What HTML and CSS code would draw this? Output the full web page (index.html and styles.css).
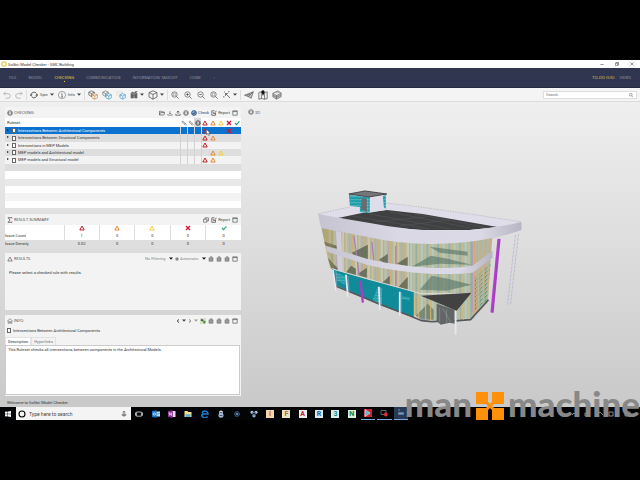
FILE: index.html
```html
<!DOCTYPE html>
<html lang="en">
<head>
<meta charset="utf-8">
<title>Solibri Model Checker - SMC Building</title>
<link rel="stylesheet" href="styles.css">
</head>
<body>
<svg class="defs" aria-hidden="true">
  <symbol id="tri" viewBox="0 0 6 6"><path d="M3 1 5.2 5H.8Z" fill="none" stroke="currentColor" stroke-width="1" stroke-linejoin="round"/></symbol>
  <symbol id="cross" viewBox="0 0 6 6"><path d="M1 1 5 5M5 1 1 5" stroke="currentColor" stroke-width="1.3"/></symbol>
  <symbol id="tick" viewBox="0 0 6 6"><path d="M1 3 2.5 4.6 5.4 1.4" fill="none" stroke="currentColor" stroke-width="1.1"/></symbol>
  <symbol id="caret" viewBox="0 0 4 3"><path d="M0 .5H4L2 2.8Z" fill="currentColor"/></symbol>
  <symbol id="win" viewBox="0 0 6 6"><path d="M.8.8H5.2V5.2H.8ZM.8 1.6H5.2" fill="none" stroke="currentColor" stroke-width=".6"/></symbol>
  <symbol id="cube" viewBox="0 0 10 10"><path d="M5 .8 9 2.6V7L5 9.2 1 7V2.6ZM1 2.6 5 4.4 9 2.6M5 4.4V9.2" fill="none" stroke="currentColor" stroke-width=".7"/></symbol>
  <symbol id="cubes" viewBox="0 0 10 10"><path d="M3.5.8 6.3 2.2V5L3.5 6.5.8 5V2.2ZM.8 2.2 3.5 3.5 6.3 2.2M3.5 3.5V6.5" fill="none" stroke="var(--back)" stroke-width=".7"/><path d="M6.7 3.5 9.4 4.8V7.8L6.7 9.2 4 7.8V4.8ZM4 4.8 6.7 6.1 9.4 4.8M6.7 6.1V9.2" fill="#f4f4f4" stroke="var(--front)" stroke-width=".7"/></symbol>
  <symbol id="zoom" viewBox="0 0 8 8"><circle cx="3.5" cy="3.5" r="2.7" fill="none" stroke="currentColor" stroke-width=".6"/><path d="M5.5 5.5 7.6 7.6M2.2 3.5H4.8" stroke="currentColor" stroke-width=".7"/></symbol>
  <symbol id="zoomin" viewBox="0 0 8 8"><circle cx="3.5" cy="3.5" r="2.7" fill="none" stroke="currentColor" stroke-width=".6"/><path d="M5.5 5.5 7.6 7.6M2.2 3.5H4.8M3.5 2.2V4.8" stroke="currentColor" stroke-width=".7"/></symbol>
  <symbol id="zoomfit" viewBox="0 0 8 8"><circle cx="3.5" cy="3.5" r="2.7" fill="none" stroke="currentColor" stroke-width=".6"/><path d="M5.5 5.5 7.6 7.6" stroke="currentColor" stroke-width=".7"/><path d="M2.3 2.3H4.7V4.7H2.3Z" fill="none" stroke="currentColor" stroke-width=".5" stroke-dasharray=".8 .4"/></symbol>
  <symbol id="undo" viewBox="0 0 8 8"><path d="M2.6.8.8 2.6 2.6 4.4M.8 2.6H5a2.2 2.2 0 0 1 0 4.6H2.5" fill="none" stroke="currentColor" stroke-width=".6"/></symbol>
  <symbol id="box" viewBox="0 0 6 6"><path d="M1 1.8H5V5.2H1ZM2 .8H4V1.8" fill="#999" stroke="#777" stroke-width=".6"/></symbol>
  <symbol id="report" viewBox="0 0 6 6"><path d="M4.5 3V5.3H.8V.8H3.6M2 2 3 4 5.4.8" fill="none" stroke="currentColor" stroke-width=".7"/></symbol>
  <symbol id="link" viewBox="0 0 6 6"><path d="M.9 1.8 1.8.9 3.2 2.3 2.3 3.2ZM2.9 3.8 3.8 2.9 5.2 4.3 4.3 5.2Z" fill="none" stroke="currentColor" stroke-width=".5"/></symbol>
  <symbol id="target" viewBox="0 0 6 6"><circle cx="3" cy="3" r="2.4" fill="none" stroke="currentColor" stroke-width=".6"/><path d="M1.5 2H4.5V4.2H1.5Z" fill="none" stroke="currentColor" stroke-width=".5"/></symbol>
  <symbol id="home" viewBox="0 0 6 6"><path d="M.4 3 3 .7 5.6 3M1.2 2.6V5.3H2.4V3.6H3.6V5.3H4.8V2.6" fill="none" stroke="currentColor" stroke-width=".5"/></symbol>
</svg>

<div class="app">
  <header class="titlebar">
    <svg class="i6" viewBox="0 0 6 6"><circle cx="3" cy="3" r="2.2" fill="#fff" stroke="#e3c52c" stroke-width="1.1"/></svg>
    <h1>Solibri Model Checker - SMC Building</h1>
    <div class="wincontrols">
      <button aria-label="Minimize"><svg class="i4" viewBox="0 0 4 4"><path d="M.3 2.5H3.7" stroke="#333" stroke-width=".5"/></svg></button>
      <button aria-label="Restore"><svg class="i4" viewBox="0 0 4 4"><path d="M.4 1.2H2.8V3.6H.4ZM1.2 1.2V.4H3.6V2.8H2.8" fill="none" stroke="#333" stroke-width=".5"/></svg></button>
      <button aria-label="Close"><svg class="i4" viewBox="0 0 4 4"><path d="M.4.4 3.6 3.6M3.6.4.4 3.6" stroke="#333" stroke-width=".5"/></svg></button>
    </div>
  </header>

  <nav class="nav">
    <a href="#">FILE</a><a href="#">MODEL</a><a href="#" class="active">CHECKING</a><a href="#">COMMUNICATION</a><a href="#">INFORMATION TAKEOFF</a><a href="#">COBIE</a><a href="#">+</a>
    <a href="#" class="todo">TO-DO (5/6)</a><a href="#" class="views">VIEWS</a>
  </nav>

  <div class="toolbar">
    <div class="group">
      <button class="pale" aria-label="Undo"><svg class="i8"><use href="#undo"/></svg></button>
      <button class="pale" aria-label="Redo"><svg class="i8 flip"><use href="#undo"/></svg></button>
    </div>
    <div class="group">
      <button><svg class="i8" viewBox="0 0 8 8"><path d="M1 4.5A3 3 0 0 1 6.5 2.5M7 3.5A3 3 0 0 1 1.6 5.6M.2 3.4 1 4.8 2.2 3.6M5.8 4.6 7 3.2 7.8 4.6" fill="none" stroke="#222" stroke-width=".7"/></svg>Spin <svg class="caret"><use href="#caret"/></svg></button>
      <button><svg class="i8" viewBox="0 0 8 8"><circle cx="4" cy="4" r="3.6" fill="none" stroke="#555" stroke-width=".5"/><path d="M4 1.8V2.6M3.2 3.4H4.1V6M3 6H5" fill="none" stroke="#444" stroke-width=".6"/></svg>Info <svg class="caret"><use href="#caret"/></svg></button>
    </div>
    <div class="group">
      <button aria-label="Show all"><svg class="i10 c1"><use href="#cubes"/></svg></button>
      <button aria-label="Show checked"><svg class="i10 c2"><use href="#cubes"/></svg></button>
      <button aria-label="Show selected"><svg class="i10 c3"><use href="#cubes"/></svg></button>
      <button aria-label="Binoculars"><svg class="i8" viewBox="0 0 8 8"><path d="M1 2.5 2 1.2H3.2L3.6 2.2H4.4L4.8 1.2H6L7 2.5V7H4.6V4.5H3.4V7H1Z" fill="#888" stroke="#333" stroke-width=".5"/><path d="M5 1 7.5.2M2.2 3V6M5.8 3V6" stroke="#333" stroke-width=".6"/></svg><svg class="caret"><use href="#caret"/></svg></button>
      <button aria-label="View cube"><svg class="i10"><use href="#cube"/></svg><svg class="caret"><use href="#caret"/></svg></button>
    </div>
    <div class="group wide">
      <button aria-label="Zoom to fit"><svg class="i8"><use href="#zoomfit"/></svg></button>
      <button aria-label="Zoom in"><svg class="i8"><use href="#zoomin"/></svg></button>
      <button aria-label="Zoom out"><svg class="i8"><use href="#zoom"/></svg></button>
      <button aria-label="Zoom window"><svg class="i8"><use href="#zoomfit"/></svg></button>
      <button aria-label="Select"><svg class="i8" viewBox="0 0 8 8"><path d="M2.5 2.5 7 7M2.5 2.5V4.9M2.5 2.5H4.9M5 .8H6.5M.8 5V6.5M1 1H2" stroke="#444" stroke-width=".7"/></svg><svg class="caret"><use href="#caret"/></svg></button>
    </div>
    <div class="group views3d">
      <button aria-label="Walk"><svg class="i10" viewBox="0 0 10 10"><path d="M.5 5.2 9.3 1.8 7.2 8.2 4.3 6.6ZM4.3 6.6 9.3 1.8M2.8 5.5 6 4" fill="#c4c4c4" stroke="#444" stroke-width=".6"/></svg></button>
      <button aria-label="Map"><svg class="i10" viewBox="0 0 10 10"><path d="M.8 2.6 3.4 1.8 6.6 2.6 9.2 1.8V8.6L6.6 9.2 3.4 8.6.8 9.2ZM3.4 2V8.6M6.6 2.6V9.2" fill="none" stroke="#333" stroke-width=".6"/><path d="M5 6 3.6 2.6A1.6 1.6 0 1 1 6.4 2.6Z" fill="#111"/></svg></button>
      <button aria-label="Layers"><svg class="i10" viewBox="0 0 10 10"><path d="M.8 3.2 6 .8 9.2 3 4.5 5.4ZM.8 3.2V7L4.5 9.2 9.2 6.8V3M.8 5.1 4.5 7.3 9.2 4.9M4.5 5.4V9.2" fill="#bbb" stroke="#555" stroke-width=".5"/></svg></button>
    </div>
    <label class="search"><input type="search" placeholder="Search" aria-label="Search"><svg class="i4" viewBox="0 0 8 8"><circle cx="3.5" cy="3.5" r="2.8" fill="none" stroke="#555"/><path d="M5.5 5.5 7.6 7.6" stroke="#555"/></svg></label>
  </div>

  <main class="work">
    <div class="side">
      <section class="panel">
        <div class="head">
          <svg class="i6"><use href="#target"/></svg><h2>CHECKING</h2>
          <div class="tools">
            <button aria-label="Open"><svg class="i6" viewBox="0 0 6 6"><path d="M.5 5V1.2H2.3L2.8 1.8H4.8V2.6M.5 5 1.6 2.6H5.8L4.8 5Z" fill="none" stroke="currentColor" stroke-width=".6"/></svg></button>
            <button aria-label="Import"><svg class="i6" viewBox="0 0 6 6"><path d="M3 1V4M2 3 3 4 4 3M.8 4V5.2H5.2V4" fill="none" stroke="currentColor" stroke-width=".5"/></svg></button>
            <button aria-label="Export"><svg class="i6" viewBox="0 0 6 6"><path d="M3 4V1M1.8 2.4 3 1 4.2 2.4M.8 3.8V5.2H5.2V3.8" fill="none" stroke="currentColor" stroke-width=".7"/></svg></button>
            <button aria-label="Settings"><svg class="i6"><use href="#target"/></svg></button>
            <button class="check"><svg class="i6" viewBox="0 0 6 6"><circle cx="3" cy="3" r="2.4" fill="#8bb0d6" stroke="#1c4b7c" stroke-width=".8"/><path d="M1.6 3 2.7 4.2 4.6 1.8" fill="none" stroke="#123" stroke-width=".7"/></svg>Check</button>
            <button><svg class="i6"><use href="#report"/></svg>Report</button>
            <button aria-label="Maximize"><svg class="i6"><use href="#win"/></svg></button>
          </div>
        </div>
        <table class="rules">
          <thead><tr><th class="name">Ruleset</th><th><svg><use href="#link"/></svg></th><th><svg><use href="#link"/></svg></th><th class="shade"><svg><use href="#target"/></svg></th><th class="sev red"><svg><use href="#tri"/></svg></th><th class="sev orange"><svg><use href="#tri"/></svg></th><th class="sev yellow"><svg><use href="#tri"/></svg></th><th class="sev crimson"><svg><use href="#cross"/></svg></th><th class="sev green"><svg><use href="#tick"/></svg></th></tr></thead>
          <tbody>
            <tr class="selected"><td><i class="arrow"></i><i class="book"></i>Intersections Between Architectural Components</td><td></td><td></td><td></td><td class="red cursorcell"><svg><use href="#tri"/></svg><svg class="cursor" viewBox="0 0 5 7"><path d="M.4.3V5.6L1.7 4.5 2.6 6.6 3.5 6.2 2.6 4.2H4.4Z" fill="#fff" stroke="#222" stroke-width=".4"/></svg></td><td></td><td></td><td class="crimson"><svg><use href="#cross"/></svg></td><td></td></tr>
            <tr class="dark"><td><i class="arrow"></i><i class="book"></i>Intersections Between Structural Components</td><td></td><td></td><td></td><td class="red"><svg><use href="#tri"/></svg></td><td class="orange"><svg><use href="#tri"/></svg></td><td></td><td></td><td></td></tr>
            <tr><td><i class="arrow"></i><i class="book"></i>Intersections in MEP Models</td><td></td><td></td><td></td><td class="red"><svg><use href="#tri"/></svg></td><td></td><td></td><td></td><td></td></tr>
            <tr class="dark"><td><i class="arrow"></i><i class="book"></i>MEP models and Architectural model</td><td></td><td></td><td></td><td></td><td class="orange"><svg><use href="#tri"/></svg></td><td class="yellow"><svg><use href="#tri"/></svg></td><td></td><td></td></tr>
            <tr><td><i class="arrow"></i><i class="book"></i>MEP models and Structural model</td><td></td><td></td><td></td><td class="red"><svg><use href="#tri"/></svg></td><td class="orange"><svg><use href="#tri"/></svg></td><td></td><td></td><td></td></tr>
            <tr class="dark"><td colspan="9"></td></tr>
            <tr class="white"><td colspan="9"></td></tr>
            <tr class="mid"><td colspan="9"></td></tr>
            <tr class="white"><td colspan="9"></td></tr>
            <tr><td colspan="9"></td></tr>
            <tr class="white"><td colspan="9"></td></tr>
          </tbody>
        </table>
      </section>

      <section class="panel">
        <div class="head">
          <svg class="i6" viewBox="0 0 6 6"><path d="M5 1.4V.7H1L3 3 1 5.3H5V4.6" fill="none" stroke="currentColor" stroke-width=".7"/></svg><h2>RESULT SUMMARY</h2>
          <div class="tools">
            <button aria-label="Copy"><svg class="i6" viewBox="0 0 6 6"><path d="M.6 2.2H3.8V5.2H.6ZM2 2.2V.8H5.4V4H3.8" fill="none" stroke="currentColor" stroke-width=".6"/></svg></button>
            <button><svg class="i6"><use href="#report"/></svg>Report</button>
            <button aria-label="Maximize"><svg class="i6"><use href="#win"/></svg></button>
          </div>
        </div>
        <table class="summary">
          <thead><tr><th class="label"></th><th class="red"><svg><use href="#tri"/></svg></th><th class="orange"><svg><use href="#tri"/></svg></th><th class="yellow"><svg><use href="#tri"/></svg></th><th class="crimson"><svg><use href="#cross"/></svg></th><th class="green"><svg><use href="#tick"/></svg></th></tr></thead>
          <tbody>
            <tr><th>Issue Count</th><td>1</td><td>0</td><td>0</td><td>0</td><td>0</td></tr>
            <tr class="dark"><th>Issue Density</th><td>0.02</td><td>0</td><td>0</td><td>0</td><td>0</td></tr>
          </tbody>
        </table>
      </section>

      <section class="panel results">
        <div class="head">
          <svg class="i6" viewBox="0 0 6 6"><path d="M3 1 5.2 5H.8Z" fill="none" stroke="currentColor" stroke-width=".6"/></svg><h2>RESULTS</h2>
          <div class="tools">
            <label class="drop"><select aria-label="Filtering"><option>No Filtering</option></select><svg class="caret"><use href="#caret"/></svg></label>
            <label class="drop"><svg class="i4" viewBox="0 0 4 4"><circle cx="2" cy="2" r="1.7" fill="#888"/></svg><select aria-label="Grouping"><option>Automatic</option></select><svg class="caret"><use href="#caret"/></svg></label>
            <button aria-label="Add"><svg class="i6"><use href="#box"/></svg></button>
            <button aria-label="Edit"><svg class="i6"><use href="#box"/></svg></button>
            <button aria-label="Remove"><svg class="i6"><use href="#box"/></svg></button>
            <button aria-label="Maximize"><svg class="i6"><use href="#win"/></svg></button>
          </div>
        </div>
        <p>Please select a checked rule with results.</p>
      </section>

      <section class="panel info">
        <div class="head">
          <svg class="i6"><use href="#home"/></svg><h2>INFO</h2>
          <div class="tools">
            <button aria-label="Back"><svg class="i4" viewBox="0 0 4 4"><path d="M3 .4 1.2 2 3 3.6" fill="none" stroke="#111" stroke-width=".8"/></svg></button>
            <button aria-label="Back history"><svg class="caret"><use href="#caret"/></svg></button>
            <button aria-label="Forward"><svg class="i4" viewBox="0 0 4 4"><path d="M1 .4 2.8 2 1 3.6" fill="none" stroke="#444" stroke-width=".7"/></svg></button>
            <button class="pale" aria-label="Forward history"><svg class="caret"><use href="#caret"/></svg></button>
            <button aria-label="Follow selection"><svg class="i6 follow" viewBox="0 0 6 6"><path d="M.8 1.2H3.2V3H.8Z" fill="#555"/><path d="M2.8 3 5.4 3.4 4.2 5.4Z" fill="#4aa02c" stroke="#4aa02c"/></svg></button>
            <button aria-label="Add"><svg class="i6"><use href="#box"/></svg></button>
            <button aria-label="Edit"><svg class="i6"><use href="#box"/></svg></button>
            <button aria-label="Remove"><svg class="i6"><use href="#box"/></svg></button>
            <button aria-label="Maximize"><svg class="i6"><use href="#win"/></svg></button>
          </div>
        </div>
        <h3><i class="book"></i>Intersections Between Architectural Components</h3>
        <div class="tabs" role="tablist"><button role="tab" class="on">Description</button><button role="tab">Hyperlinks</button></div>
        <div class="description">This Ruleset checks all intersections between components in the Architectural Models.</div>
      </section>
      <footer class="status">Welcome to Solibri Model Checker</footer>
    </div>

    <section class="view">
      <div class="viewhead"><svg class="i6"><use href="#target"/></svg><h2>3D</h2></div>
      <svg class="scene" viewBox="310 185 220 155" role="img" aria-label="Building model">
        <defs>
          <pattern id="mull" width="13" height="40" patternUnits="userSpaceOnUse" patternTransform="skewY(8)">
            <rect width="13" height="40" fill="#b0b9a6"/>
            <path d="M4 0V40H8V0Z" fill="#c5cbb9"/>
            <path d="M1 0V40" stroke="#dda95c" stroke-width="1.2"/><path d="M4.8 0V40M9 0V40" stroke="#dcc08a" stroke-width=".9"/><path d="M7 0V40" stroke="#8c8d70" stroke-width=".6"/><path d="M11.5 0V40" stroke="#b895b4" stroke-width=".5"/>
          </pattern>
          <pattern id="curved" width="11" height="40" patternUnits="userSpaceOnUse">
            <rect width="11" height="40" fill="#a7bdb2"/>
            <path d="M1 0V40" stroke="#e4b462" stroke-width="1.1"/><path d="M7 0V40" stroke="#d7bd7c" stroke-width="1"/><path d="M4 0V40" stroke="#bfccb9" stroke-width="1.6"/><path d="M9.5 0V40" stroke="#87a69b" stroke-width=".8"/>
          </pattern>
          <pattern id="hatch" width="3" height="3" patternUnits="userSpaceOnUse"><rect width="3" height="3" fill="#149aa7"/><path d="M0 1 3 2.2" stroke="#9dd0d6" stroke-width=".6"/></pattern>
          <pattern id="speck" width="5" height="4" patternUnits="userSpaceOnUse" patternTransform="skewY(-38)"><path d="M0 0H3V1H1V2.4H0Z" fill="#2d9f9c"/></pattern>
          <linearGradient id="fascia"><stop offset="0" stop-color="#c6c3d1"/><stop offset=".4" stop-color="#dad8e4"/><stop offset=".8" stop-color="#dbd9e5"/><stop offset="1" stop-color="#b7b5c3"/></linearGradient>
        </defs>
        <path d="M318 214 350 207 362 207V213L338 218ZM386 203 420 208 470 214 522 222 498 227 430 216 386 210Z" fill="#dfdde9"/>
        <path d="M318 214 350 207M386 203 420 207 470 214 522 222" fill="none" stroke="#a09eac" stroke-width=".5" stroke-dasharray="1.5 1"/>
        <path d="M338 218 362 213 387 210 423 214 498 227 470 230 420 230 375 226Z" fill="#3f4042"/>
        <path d="M352 216 430 229M370 214 450 229M390 212 470 228M415 214 488 228M375 222 425 217M400 226 450 220" stroke="#555658" stroke-width=".6"/>
        <path d="M349 195 368 197V213L360 212V207L350 206Z" fill="url(#hatch)"/>
        <path d="M362 198 367 199V212L361 209Z" fill="#6b6b70"/>
        <path d="M368 197 386 195V210L368 213Z" fill="#dedeea"/>
        <path d="M368 197H370V212L368 213ZM383 196 386 195V209L384 207Z" fill="url(#hatch)"/>
        <path d="M349 194 365 191 387 194 369 197Z" fill="#77767a" stroke="#3e3e42" stroke-width=".9"/>
        <path d="M321 226 367 236 420 244 V295 L367 279 330 269Z" fill="url(#mull)"/>
        <path d="M410 243 460 242 474 240V319L458 322 430 320 410 314Z" fill="url(#curved)"/>
        <path d="M473 240 493 235 488 303 472 319Z" fill="#b5b69f"/>
        <path d="M474 279 491 264 488 300 474 312Z" fill="url(#speck)"/>
        <path d="M475 241V316M478 240 477 314M482 239 480 310M486 238 484 306M491 237 488 302" fill="none" stroke="#dba568" stroke-width=".7"/>
        <path d="M472.5 242V312" stroke="#b78acb" stroke-width="1"/>
        <path d="M324 242 337 246V249L326 246ZM352 253 368 245V261L355 257ZM379 260 388 254V265ZM397 264 408 257V267ZM328 258 341 272 331 268ZM346 273 351 266 356 269V276ZM358 274 367 268V278L360 276ZM380 285 390 276V288ZM398 288 408 277V293Z" fill="#59634f" opacity=".8"/>
        <path d="M412 267 431 256 448 259 472 265 440 264ZM430 247 468 252V256L440 253ZM420 290 432 276 448 279 472 285 447 291Z" fill="#547166" opacity=".6"/>
        <path d="M321 226 334 231V271L332 269Z" fill="#a18a49" opacity=".35"/>
        <path d="M336 231 341 232 343 272 338 271Z" fill="#cfcddb"/>
        <path d="M354 236 360 280M396 246V292M372 242 374 262" stroke="#ab7abb" stroke-width="1.2"/>
        <path d="M325 246 367 259Q395 266 430 268 455 269 473 266L493 251V258L473 273Q455 275 430 274 395 272 367 265L327 252Z" fill="url(#fascia)"/>
        <path d="M318 214Q345 219 370 223 420 233 470 230 498 228 522 222V230Q498 239 460 243 410 247 367 237L321 228Z" fill="url(#fascia)"/>
        <path d="M332 269 367 279 414 292V318L379 305 335 285Z" fill="#108b99"/>
        <path d="M336 273 345 276V285L337 281ZM402 296 410 298V301L402 299Z" fill="url(#hatch)"/>
        <path d="M378 287 382 288V305L372 302Z" fill="url(#hatch)"/>
        <path d="M332 269 367 279 422 294H472" fill="none" stroke="#ddd6d2" stroke-width="1.2"/>
        <path d="M335 286 379 304 410 316 422 321 432 322 458 321 471 320 489 300" fill="none" stroke="#55595b" stroke-width="1.6"/>
        <path d="M416 316 428 304 434 310V320H422Z" fill="#5e7467" opacity=".7"/>
        <path d="M415 297V316M419 297V318M426 299V320M431 302V321M460 311V320M464 306V320M468 300V319" stroke="#e5b467" stroke-width="1"/>
        <path d="M437 304 455 310V324L450 323 441 325 437 321Z" fill="#636667"/><path d="M440 308V322M443 309 451 322M447 310V323" stroke="#a0a3a3" stroke-width=".5"/>
        <path d="M421 296 472 293 457 311Z" fill="#424242"/>
        <path d="M333 270 336 291M346 275 348 297M379 287 380 310M400 292V316M456 311V335" stroke="#e9e7f0" stroke-width="1.8"/>
        <path d="M336 271 337 290M348 276 349.5 296M381 288 381.5 309M401.5 293V315" stroke="#b0b1c8" stroke-width=".5"/>
        <path d="M360.5 281 363 303" stroke="#b138c6" stroke-width="2.2"/>
        <path d="M499.5 239 492.5 313" stroke="#b43dce" stroke-width="3.2"/><path d="M500 239 493 313" stroke="#8c4aa1" stroke-width=".6"/>
        <path d="M516 235 508 305M519 234 511 305" stroke="#bcaed4" stroke-width=".8" stroke-dasharray="3 1"/>
      </svg>
    </section>
  </main>

  <footer class="taskbar">
    <button class="start" aria-label="Start"><svg class="i6" viewBox="0 0 6 6"><path d="M0 .8 2.6.4V2.8H0ZM3 .4 6 0V2.8H3ZM0 3.2H2.6V5.6L0 5.2ZM3 3.2H6V6L3 5.6Z" fill="#fff"/></svg></button>
    <label class="tasksearch"><svg class="i8" viewBox="0 0 8 8"><circle cx="4" cy="4" r="3" fill="none" stroke="#000" stroke-width="1.1"/></svg><input type="text" placeholder="Type here to search" aria-label="Type here to search"><svg class="i6" viewBox="0 0 6 6"><path d="M2.2.5H3.8V3.5H2.2ZM1.2 3V4.5H4.8V3M3 4.5V6" fill="none" stroke="#444" stroke-width=".6"/></svg></label>
    <div class="apps">
      <button aria-label="Task view"><svg class="i8" viewBox="0 0 8 8"><path d="M1.6 2H6.4V6.2H1.6ZM.5 2.5V5.7M7.5 2.5V5.7" fill="none" stroke="#ddd" stroke-width=".8"/></svg></button>
      <button aria-label="Outlook"><svg class="i8" viewBox="0 0 8 8"><path d="M3 1.5H8V6.5H3Z" fill="#b8def7"/><path d="M0 1 4.5.3V7.7L0 7Z" fill="#1173c5"/><circle cx="2.3" cy="4" r="1.2" fill="none" stroke="#fff" stroke-width=".7"/><path d="M4 2.5 6 4.5 8 2.5" fill="none" stroke="#1173c5" stroke-width=".7"/></svg></button>
      <button aria-label="OneNote"><svg class="i8" viewBox="0 0 8 8"><path d="M3 1H7.5V7H3Z" fill="#e9d2ec"/><path d="M0 1 4.8.3V7.7L0 7Z" fill="#84318c"/><path d="M1.3 5.5V2.5L3.3 5.5V2.5" fill="none" stroke="#fff" stroke-width=".7"/></svg></button>
      <button aria-label="File Explorer"><svg class="i8" viewBox="0 0 8 8"><path d="M.5 1H3.5L4.2 2H7.5V7H.5Z" fill="#f4e08e"/><path d="M1.5 4.2H6.5V7H1.5Z" fill="#5ab4d5"/></svg></button>
      <button aria-label="Edge"><svg class="i8" viewBox="0 0 8 8"><path d="M1 4H7A3 3 0 0 0 1.2 3M1 4A3 3 0 0 0 6.5 6.3" fill="none" stroke="#1680d8" stroke-width="1.5"/></svg></button>
      <button aria-label="Assistant"><svg class="i8" viewBox="0 0 8 8"><circle cx="4" cy="2.5" r="2" fill="#d4deee"/><circle cx="4" cy="5.3" r="2.5" fill="#a8b9d8"/><path d="M2.8 2.5H5.2M2.5 5.5H5.5" stroke="#243b64" stroke-width=".8"/></svg></button>
      <button aria-label="Settings"><svg class="i8" viewBox="0 0 8 8"><circle cx="4" cy="4" r="2.5" fill="#1c304b" stroke="#56708f" stroke-width="1" stroke-dasharray="1 .6"/><circle cx="4" cy="4" r="1" fill="#7aa0c3"/></svg></button>
      <button aria-label="Network"><svg class="i8" viewBox="0 0 8 8"><circle cx="2" cy="2.3" r="1.5" fill="#c4d6ed"/><circle cx="6" cy="2.3" r="1.5" fill="#c4d6ed"/><circle cx="4" cy="5.8" r="1.7" fill="#90aaca"/><path d="M2 2.3H6L4 5.8Z" fill="none" stroke="#496c98" stroke-width=".6"/></svg></button>
      <button class="letter inventor">I</button>
      <button class="letter formit">F</button>
      <button class="letter autocad">A</button>
      <button class="letter revit">R</button>
      <button class="letter max">3</button>
      <button class="letter navis">N</button>
      <button class="open" aria-label="Viewer"><svg class="i8" viewBox="0 0 8 8"><path d="M0 0H8V8H0Z" fill="#c92832"/><path d="M1 .5 6 4 1 7.5Z" fill="#55b4dd" stroke="#fff" stroke-width=".5"/></svg></button>
      <button class="open" aria-label="Recorder"><svg class="i8" viewBox="0 0 8 8"><path d="M1 1.5H6V5.5H1Z" fill="none" stroke="#8b8b8b" stroke-width=".7"/><circle cx="5.8" cy="5.5" r="1.9" fill="#e13035"/></svg></button>
      <button class="open current" aria-label="Model Checker"><svg class="i8" viewBox="0 0 8 8"><path d="M1 3H7V6H1Z" fill="#53769e"/><path d="M1 1H3M2 4.5H6" stroke="#85a8cd" stroke-width=".8"/></svg></button>
    </div>
    <div class="tray"><svg class="trayicons" viewBox="0 0 60 8"><path d="M1 5 3 3 5 5M14 3H18V6H14ZM26 5 29 2 32 5M38 2H42V6H38ZM54 2H59V6H54Z" fill="none" stroke="#bbb" stroke-width=".7"/></svg></div>
  </footer>
  <div class="watermark"><span>man</span><svg viewBox="0 0 28 28"><path d="M0 0H12V12H0ZM16 0H28V12H16ZM0 16H12V28H0ZM16 16H28V28H16Z" fill="#ff910a"/><path d="M9 9 19 19M19 9 9 19" stroke="#ff910a" stroke-width="3"/></svg><span>machine</span></div>
</div>
</body>
</html>
```

FILE: styles.css
```css
* { box-sizing: border-box; }
body {
  margin: 0;
  padding: 60px 0;
  background: #000;
  font-family: Roboto, "Liberation Sans", sans-serif;
  font-size: 4px;
  line-height: 5px;
  color: #333;
}
button, input, select {
  margin: 0;
  padding: 0;
  border: 0;
  background: none;
  font: inherit;
  color: inherit;
  appearance: none;
  outline: 0;
}
button { display: flex; align-items: center; gap: 1px; }
svg { display: block; flex: none; }
h1, h2, h3, p { margin: 0; font-size: 4px; font-weight: 400; }
h2, .nav { font-family: "Open Sans", sans-serif; }
a { color: inherit; text-decoration: none; }
.defs { position: absolute; width: 0; height: 0; }
.i4 { width: 4px; height: 4px; }
.i6 { width: 6px; height: 6px; }
.i8 { width: 8px; height: 8px; }
.i10 { width: 10px; height: 10px; }
.caret { width: 4px; height: 3px; }
.flip { transform: scaleX(-1); }
.pale { color: #999; }
.red { color: #c8202b; }
.orange { color: #ec8a2c; }
.yellow { color: #f2cf35; }
.crimson { color: #cf1430; }
.green { color: #25ab73; }

.app { position: relative; }
.titlebar { display: flex; align-items: center; height: 8px; padding: 0 6px 0 1px; gap: 1px; background: #fff; }
.wincontrols { display: flex; gap: 11px; margin-left: auto; }

.nav {
  display: flex;
  align-items: center;
  gap: 12px;
  height: 20px;
  padding: 0 9px;
  background: #30364f;
  border-bottom: 1px solid #262a3e;
  color: #9296a4;
}
.nav .active { color: #f6d63c; position: relative; }
.nav .active::after { content: ""; position: absolute; left: 50%; top: 6px; width: 1px; height: 1px; background: #f0cf3a; }
.nav .todo { margin-left: auto; color: #e3c852; }
.nav .views { margin-left: -7px; }

.toolbar { display: flex; align-items: center; height: 14px; padding: 0 3px; background: #f4f4f4; border-bottom: 1px solid #dcdcdc; color: #444; }
.group { display: flex; align-items: center; gap: 4px; height: 10px; padding-right: 3px; margin-right: 3px; border-right: 1px solid #ddd; }
.group.wide { gap: 5px; }
.views3d { border: 0; }
.toolbar button { gap: 2px; }
.c1 { --back: #555; --front: #c78b52; }
.c2 { --back: #777; --front: #4d9fcb; }
.c3 { --back: #ddd; --front: #4d9fcb; }
.search { display: flex; align-items: center; width: 94px; height: 8px; margin-left: auto; padding: 0 3px 0 2px; background: #fff; border: 1px solid #ddd; }
.search input { flex: 1; min-width: 0; }
input::placeholder { color: #777; opacity: 1; }

.work { display: flex; min-height: 305px; background: linear-gradient(#efefef, #c9c9c9); }
.side { display: flex; flex-direction: column; flex: 0 0 241px; padding: 5px 0 0 5px; gap: 5px; }
.panel { background: #f3f3f3; }
.panel:first-child { margin-bottom: 1px; }
.head { display: flex; align-items: center; gap: 1px; height: 11px; padding: 0 3px 0 2px; color: #444; }
.tools { display: flex; align-items: center; gap: 2px; margin-left: auto; }
.check { color: #234c78; }

table { width: 100%; border-collapse: collapse; table-layout: fixed; }
th, td { padding: 0; font-weight: 400; line-height: 5px; text-align: center; overflow: hidden; white-space: nowrap; }
td svg, th svg { width: 6px; height: 6px; margin: 0 auto; }
.rules { height: 90px; }
.rules thead tr { height: 9px; background: #fff; }
.rules tbody tr { height: 7px; }
.rules th { width: 7px; }
.rules .name { width: auto; padding-left: 2px; text-align: left; }
.rules .sev { width: 8px; }
.rules .shade { background: #d8d8d8; }
.rules tbody td:first-child { padding-left: 1px; text-align: left; }
.rules tbody td:nth-child(-n+4):not(:last-child) { border-right: 1px solid #d2d2d2; }
.dark { background: #dedede; }
.mid { background: #e8e8e8; }
.white { background: #fff; }
.rules .selected { background: #0b72cf; color: #fff; }
.rules .selected td:nth-child(-n+4) { border-color: #3d8cd6; }
.arrow { display: inline-block; margin: 0 3px 1px 1px; border-left: 2px solid #222; border-top: 1px solid transparent; border-bottom: 1px solid transparent; }
.book { display: inline-block; width: 4px; height: 5px; margin-right: 2px; border: 1px solid #666; background: #fff; vertical-align: middle; }
.cursorcell { position: relative; overflow: visible; }
.rules .cursor { position: absolute; left: 4px; top: 2px; width: 5px; height: 7px; z-index: 1; }

.summary { height: 23px; }
.summary tr:not(.dark) { background: #fff; }
.summary .label { width: 59px; }
.summary tbody th { text-align: left; }
.summary th:not(:last-child), .summary td:not(:last-child) { border-right: 1px solid #ddd; }

.results { min-height: 57px; }
.results p { padding: 6px 4px; }
.drop { display: flex; align-items: center; gap: 1px; color: #888; }
.drop .caret { color: #111; }
.drop select { width: auto; margin-right: 2px; }

.info { display: flex; flex-direction: column; height: 81px; }
.info h3 { padding: 2px; height: 11px; line-height: 6px; }
.follow { background: #d7dfcf; }
.tabs { display: flex; height: 8px; }
.tabs button { padding: 0 2px; border: 1px solid #e2e2e2; border-bottom: 0; color: #777; }
.tabs .on { background: #fff; color: #333; }
.description { flex: 1; margin: 0 1px 1px 0; padding: 1px 2px; background: #fff; border: 1px solid #ccc; }
.status { padding-left: 2px; line-height: 4px; }

.view { flex: 1; min-width: 0; padding: 7px; }
.viewhead { display: flex; align-items: center; gap: 1px; height: 6px; color: #555; }
.scene { width: 57%; margin: 70px 0 0 62px; }

.taskbar { display: flex; align-items: stretch; height: 13px; background: #030406; color: #fff; }
.start { justify-content: center; width: 16px; }
.tasksearch { display: flex; align-items: center; gap: 3px; width: 115px; padding: 0 4px 0 2px; background: #f4f4f4; }
.tasksearch input { flex: 1; min-width: 0; font-size: 5px; color: #333; }
.tasksearch input::placeholder { color: #444; }
.apps { display: grid; grid-template-columns: repeat(17, 1fr); width: 278px; }
.apps button { justify-content: center; }
.apps .letter { align-self: center; justify-self: center; width: 8px; height: 8px; font-size: 7px; font-weight: 700; line-height: 8px; }
.inventor { background: #f6d5ac; color: #b76c1e; }
.formit { background: #eee1c6; color: #95733c; }
.autocad { background: #eee; color: #b71e2a; }
.revit { background: #dce9f5; color: #22609e; }
.max { background: #d4f0eb; color: #178e89; }
.navis { background: #d9efd9; color: #138347; }
.apps .open { margin: 0 1px; border-bottom: 1px solid #78a9df; }
.apps .current { background: #283a53; }
.tray { display: flex; align-items: center; margin-left: auto; padding-right: 9px; }
.trayicons { width: 60px; height: 8px; }

.watermark { position: absolute; right: 0; bottom: -5px; display: flex; align-items: center; gap: 4px; color: #888; font-family: Lato, sans-serif; font-size: 35px; font-weight: 900; line-height: 44px; }
.watermark svg { width: 28px; height: 28px; margin-top: 6px; }
```
